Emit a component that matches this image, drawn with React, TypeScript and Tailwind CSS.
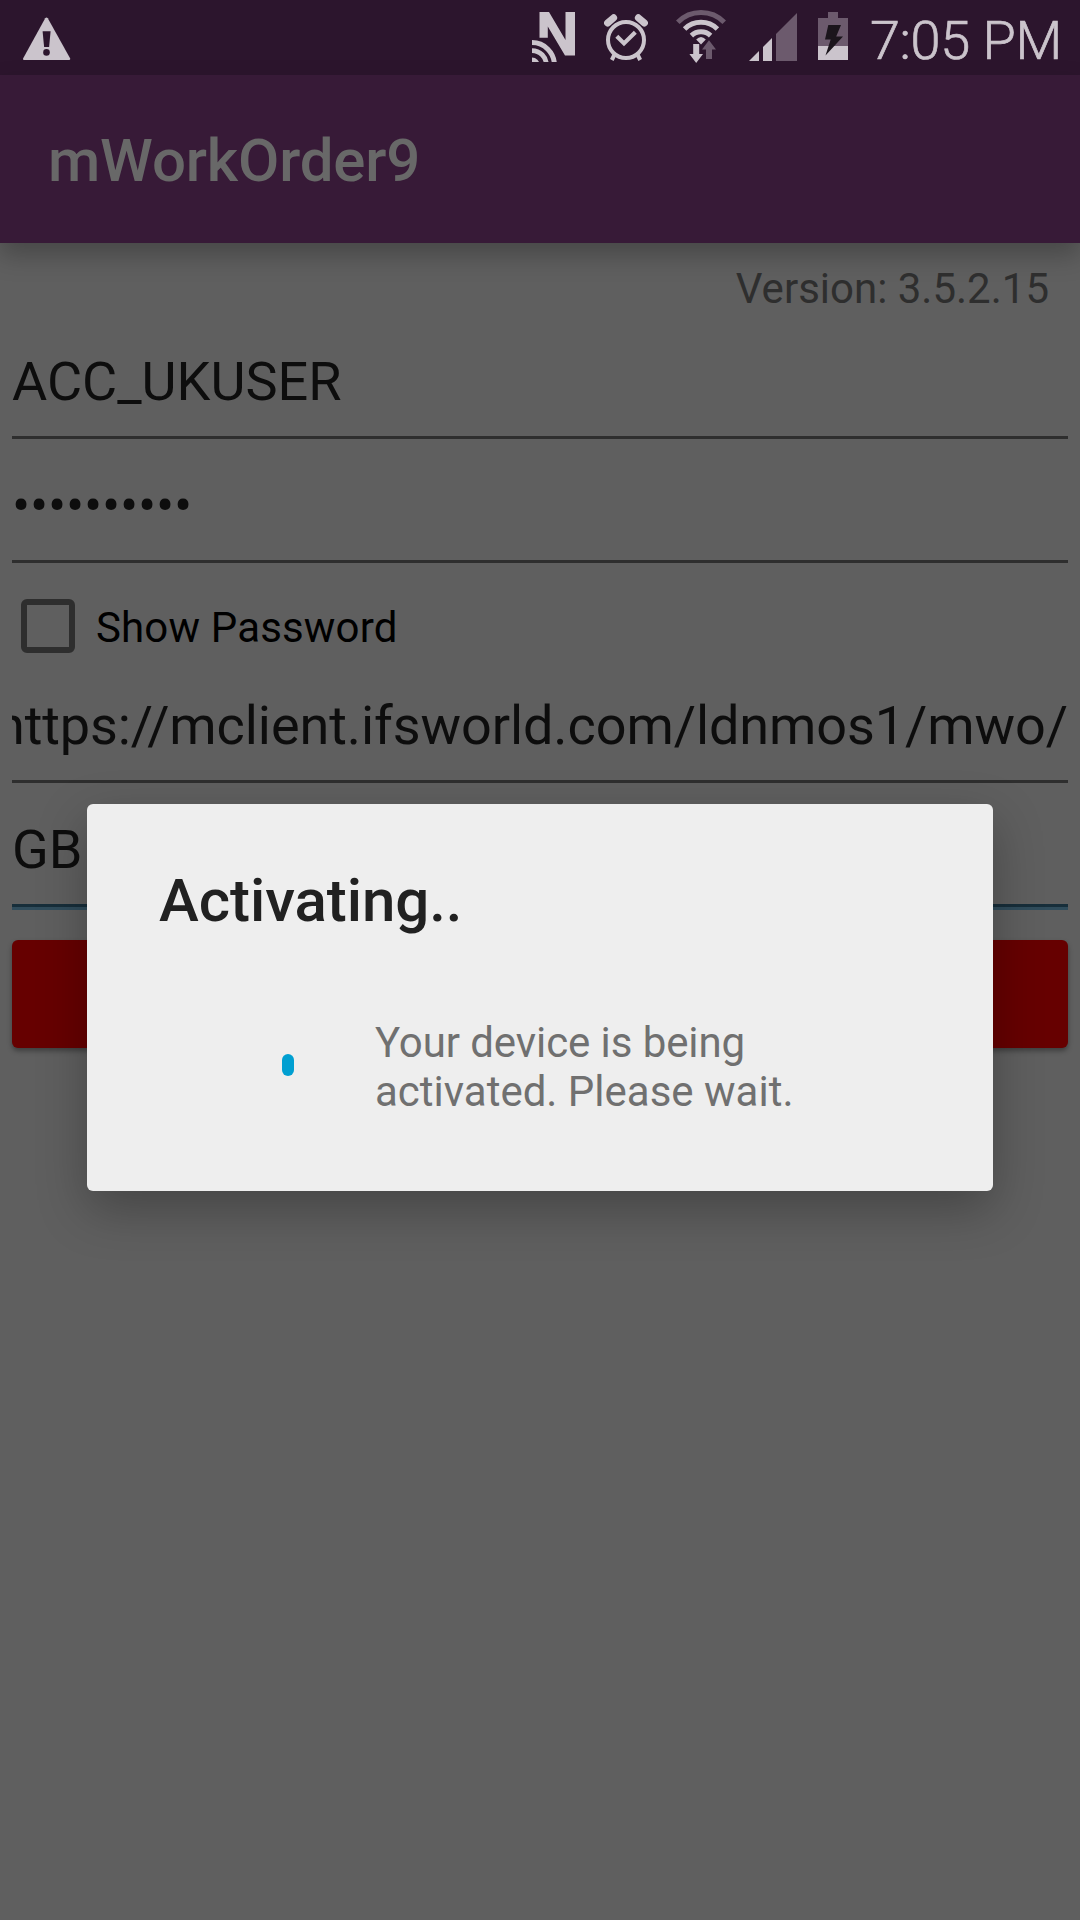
import React from "react";

const LIGHT = "#cbc4cc";
const DIM = "#6c5a6d";

function WarningIcon() {
  return (
    <svg width="48" height="44" viewBox="0 0 48 44" className="shrink-0">
      <path d="M22.2 1.2Q23.5 -.4 24.8 1.2L47.2 41.4Q47.6 43 46 43H1Q-.4 43 .2 41.2Z" fill={LIGHT} />
      <path d="M19.6 14.3H27.6L26.1 30H21.1Z" fill="#2c152d" />
      <circle cx="23.5" cy="35.4" r="3.3" fill="#2c152d" />
    </svg>
  );
}

function NfcIcon() {
  return (
    <svg width="43" height="50" viewBox="0 0 43 50" className="shrink-0" fill="none">
      <path d="M7.5 0H17L33.5 28V0H43V43.5H33L15.8 14.5V25.7H7.5Z" fill={LIGHT} />
      <g stroke={LIGHT} strokeWidth="5">
        <circle cx="0" cy="53" r="22.4" />
        <circle cx="0" cy="53" r="14.4" strokeWidth="4.8" />
      </g>
      <circle cx="0" cy="53" r="7.6" fill={LIGHT} />
    </svg>
  );
}

function AlarmIcon() {
  return (
    <svg width="44" height="48" viewBox="0 0 44 48" className="shrink-0" fill="none" stroke={LIGHT}>
      <circle cx="22" cy="26" r="18" strokeWidth="4" />
      <path d="M3.6 9L9.6 3.8M40.4 9L34.4 3.8" strokeWidth="7" strokeLinecap="round" />
      <path d="M10.5 40.5L7.8 46M33.5 40.5L36.2 46" strokeWidth="4" />
      <path d="M12.8 22.2L20 29.4L31.3 18.2" strokeWidth="4.2" />
    </svg>
  );
}

function WifiIcon() {
  return (
    <svg width="50" height="55" viewBox="0 0 50 55" className="shrink-0" fill="none">
      <path d="M1.8 13.2A32.5 32.5 0 0 1 48.2 13.2" stroke={DIM} strokeWidth="5" />
      <path d="M8.6 20A23.5 23.5 0 0 1 41.4 20" stroke={LIGHT} strokeWidth="5" />
      <path d="M15.4 26.6A14 14 0 0 1 34.6 26.6" stroke={LIGHT} strokeWidth="5" />
      <path d="M20.2 30.6Q25 25.6 29.8 30.6L25 35.5Z" fill={LIGHT} />
      <path d="M17.2 35H23.2V45H27L20.2 54L13.4 45H17.2Z" fill={LIGHT} />
      <path d="M30 50V40.5H26L33 31.2L40 40.5H36V50Z" fill={DIM} />
    </svg>
  );
}

function SignalIcon() {
  return (
    <svg width="48" height="48" viewBox="0 0 48 48" className="shrink-0">
      <path d="M0 48L10 38V48Z" fill={LIGHT} />
      <path d="M14 34L23 25V48H14Z" fill={LIGHT} />
      <path d="M27 21L48 0V48H27Z" fill={DIM} />
    </svg>
  );
}

function BatteryIcon() {
  return (
    <svg width="30" height="48" viewBox="0 0 30 48" className="shrink-0">
      <path d="M10 0H20V6H30V34H0V6H10Z" fill={DIM} />
      <path d="M0 34H30V48H0Z" fill={LIGHT} />
      <path d="M10.3 13H23L18.2 24.4H25L7.5 43.5L12.7 27.5H7Z" fill="#1b151c" />
    </svg>
  );
}

function StatusBar() {
  return (
    <div className="flex h-[75px] items-start bg-[#2c152d] pl-[23px] text-[#cbc4cc]">
      <div className="pt-[17px]"><WarningIcon /></div>
      <div className="ml-auto flex items-start">
        <div className="mr-[29px] pt-3"><NfcIcon /></div>
        <div className="mr-7 pt-3.5"><AlarmIcon /></div>
        <div className="mr-[23px] pt-[9px]"><WifiIcon /></div>
        <div className="mr-[21px] pt-[13px]"><SignalIcon /></div>
        <div className="mr-[22px] pt-3"><BatteryIcon /></div>
        <div className="mt-[9px] w-[210px] text-[54px] leading-[64px] font-light tracking-[-0.35px] whitespace-nowrap [-webkit-text-stroke:0.7px_#cbc4cc]">7:05 PM</div>
      </div>
    </div>
  );
}

function Field({ children, className = "" }: { children: React.ReactNode; className?: string }) {
  return (
    <div className={"overflow-hidden border-b-[3px] border-[#2e2e2e] text-[54px] leading-[66px] text-[#0d0d0d] whitespace-nowrap " + className}>
      {children}
    </div>
  );
}

export default function App() {
  return (
    <div className="relative flex h-[1920px] w-[1080px] flex-col overflow-hidden bg-[#5f5f5f] font-['Roboto',sans-serif]">
      <StatusBar />
      <header className="flex h-[168px] items-center bg-[#371a37] pt-[4px] pl-12 text-[60px] font-medium tracking-[-0.15px] text-[#686868] shadow-[0_12px_24px_rgba(0,0,0,0.25)]">
        <h1 className="leading-[70px]">mWorkOrder9</h1>
      </header>

      <main className="flex flex-col px-3">
        <div className="mt-[21px] h-[50px] pr-[19px] text-right text-[42px] leading-[50px] text-[#2e2e2e]">Version: 3.5.2.15</div>
        <Field className="mt-[35px] h-[90px]">ACC_UKUSER</Field>
        <Field className="mt-[34px] h-[90px] tracking-[-0.22px]">••••••••••</Field>
        <label className="mt-9 flex h-[54px] items-center pl-[9px]">
          <span className="size-[54px] rounded-[6px] border-[6px] border-[#2e2e2e]" />
          <span className="mt-[3px] ml-[21px] text-[42px] leading-[50px] tracking-[0.15px] text-black">Show Password</span>
        </label>
        <Field className="mt-[40px] flex h-[90px] justify-end tracking-[-0.08px]">
          <span>https://mclient.ifsworld.com/ldnmos1/mwo/</span>
        </Field>
        <Field className="mt-[34px] h-[93px] border-b-0">GB</Field>
        <div className="-mt-[6px] h-[6px] border-t-[3px] border-[#172e3a] bg-[#304c5b]" />
        <div className="mt-[30px] h-[108px] rounded-[6px] bg-[#660000] shadow-[0_3px_5px_rgba(0,0,0,0.35)]" />
      </main>

      <div className="absolute inset-x-0 top-[75px] bottom-0 flex items-center justify-center">
        <section className="flex h-[387px] w-[906px] flex-col rounded-[6px] bg-[#eeeeee] px-[72px] shadow-[0_18px_50px_rgba(0,0,0,0.28)]">
          <h2 className="mt-[62px] text-[60px] leading-[70px] font-medium tracking-[-0.05px] text-[#212121]">Activating..</h2>
          <div className="mt-[82px] flex items-start">
            <span className="mt-[36px] ml-[123px] h-[22px] w-3 rounded-full bg-[#009fd1]" />
            <p className="ml-[81px] text-[42px] leading-[49px] text-[#707070]">
              <span className="tracking-[-0.08px]">Your device is being</span>
              <br />
              activated. Please wait.
            </p>
          </div>
        </section>
      </div>
    </div>
  );
}
